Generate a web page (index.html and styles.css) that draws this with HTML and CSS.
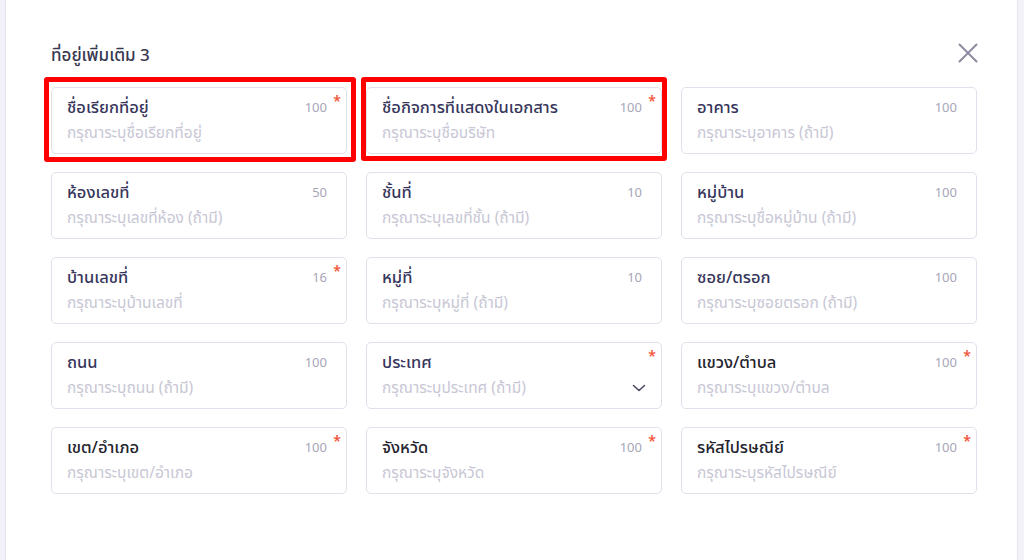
FILE: index.html
```html
<!DOCTYPE html>
<html lang="th">
<head>
<meta charset="utf-8">
<title>ที่อยู่เพิ่มเติม 3</title>
<link rel="stylesheet" href="styles.css">
</head>
<body>
<div class="modal">
  <div class="header">
    <h2 class="title">ที่อยู่เพิ่มเติม 3</h2>
    <button class="close" aria-label="close">
      <svg width="20" height="20" viewBox="0 0 20 20"><path d="M1.5 1.5 L18.5 18.5 M18.5 1.5 L1.5 18.5" stroke="#8d8ca2" stroke-width="2" stroke-linecap="round" fill="none"/></svg>
    </button>
  </div>
  <div class="grid">
    <div class="field mark mark-a"><div class="row"><span class="label">ชื่อเรียกที่อยู่</span><span class="count">100</span></div><div class="ph">กรุณาระบุชื่อเรียกที่อยู่</div><span class="req">*</span></div>
    <div class="field mark mark-b"><div class="row"><span class="label">ชื่อกิจการที่แสดงในเอกสาร</span><span class="count">100</span></div><div class="ph">กรุณาระบุชื่อบริษัท</div><span class="req">*</span></div>
    <div class="field"><div class="row"><span class="label">อาคาร</span><span class="count">100</span></div><div class="ph">กรุณาระบุอาคาร (ถ้ามี)</div></div>

    <div class="field"><div class="row"><span class="label">ห้องเลขที่</span><span class="count">50</span></div><div class="ph">กรุณาระบุเลขที่ห้อง (ถ้ามี)</div></div>
    <div class="field"><div class="row"><span class="label">ชั้นที่</span><span class="count">10</span></div><div class="ph">กรุณาระบุเลขที่ชั้น (ถ้ามี)</div></div>
    <div class="field"><div class="row"><span class="label">หมู่บ้าน</span><span class="count">100</span></div><div class="ph">กรุณาระบุชื่อหมู่บ้าน (ถ้ามี)</div></div>

    <div class="field"><div class="row"><span class="label">บ้านเลขที่</span><span class="count">16</span></div><div class="ph">กรุณาระบุบ้านเลขที่</div><span class="req">*</span></div>
    <div class="field"><div class="row"><span class="label">หมู่ที่</span><span class="count">10</span></div><div class="ph">กรุณาระบุหมู่ที่ (ถ้ามี)</div></div>
    <div class="field"><div class="row"><span class="label">ซอย/ตรอก</span><span class="count">100</span></div><div class="ph">กรุณาระบุซอยตรอก (ถ้ามี)</div></div>

    <div class="field"><div class="row"><span class="label">ถนน</span><span class="count">100</span></div><div class="ph">กรุณาระบุถนน (ถ้ามี)</div></div>
    <div class="field select"><div class="row"><span class="label">ประเทศ</span></div><div class="ph-row"><span class="ph">กรุณาระบุประเทศ (ถ้ามี)</span><svg class="chev" width="14" height="8" viewBox="0 0 14 8"><path d="M1.5 1.5 L7 6.5 L12.5 1.5" stroke="#4a4a62" stroke-width="1.6" stroke-linecap="round" stroke-linejoin="round" fill="none"/></svg></div><span class="req">*</span></div>
    <div class="field"><div class="row"><span class="label dark">แขวง/ตำบล</span><span class="count">100</span></div><div class="ph">กรุณาระบุแขวง/ตำบล</div><span class="req">*</span></div>

    <div class="field"><div class="row"><span class="label dark">เขต/อำเภอ</span><span class="count">100</span></div><div class="ph">กรุณาระบุเขต/อำเภอ</div><span class="req">*</span></div>
    <div class="field"><div class="row"><span class="label dark">จังหวัด</span><span class="count">100</span></div><div class="ph">กรุณาระบุจังหวัด</div><span class="req">*</span></div>
    <div class="field"><div class="row"><span class="label dark">รหัสไปรษณีย์</span><span class="count">100</span></div><div class="ph">กรุณาระบุรหัสไปรษณีย์</div><span class="req">*</span></div>
  </div>
</div>
</body>
</html>
```

FILE: styles.css
```css
* { box-sizing: border-box; }
html, body { margin: 0; padding: 0; }
body {
  background: #f3f2f9;
  font-family: "Noto Sans Thai", "Noto Sans", "Liberation Sans", sans-serif;
  width: 1024px;
  height: 560px;
  overflow: hidden;
}
.modal {
  margin-left: 5px;
  width: 1013px;
  height: 560px;
  background: #ffffff;
  border-left: 1px solid #e6e5ef;
  border-right: 1px solid #e6e5ef;
  padding: 43px 40px 0 45px;
}
.header {
  display: flex;
  justify-content: space-between;
  align-items: flex-start;
  height: 24px;
  margin-bottom: 20px;
}
.title {
  margin: 0;
  padding-top: 1px;
  font-size: 17px;
  font-weight: 500;
  color: #383850;
  line-height: 24px;
}
.close {
  border: 0;
  background: none;
  padding: 0;
  width: 20px;
  height: 20px;
  margin-right: -1px;
  display: flex;
}
.grid {
  display: grid;
  grid-template-columns: repeat(3, 296px);
  grid-auto-rows: 67px;
  column-gap: 19px;
  row-gap: 18px;
}
.field {
  position: relative;
  border: 1px solid #e2e1eb;
  border-radius: 5px;
  padding: 10px 19px 0 15px;
  background: #fff;
}
.mark::after {
  content: "";
  position: absolute;
  border: 5px solid #ff0000;
  border-radius: 3px;
  pointer-events: none;
}
.mark-a::after { left: -8px; right: -10px; top: -11px; bottom: -9px; }
.mark-b::after { left: -6px; right: -6px; top: -11px; bottom: -8px; }
.row {
  display: flex;
  justify-content: space-between;
  align-items: center;
  height: 20px;
}
.label {
  font-size: 16.5px;
  font-weight: 500;
  color: #37365c;
  line-height: 20px;
  white-space: nowrap;
}
.label.dark { color: #24242e; }
.count {
  font-size: 13px;
  color: #a7a6b8;
  line-height: 20px;
}
.ph {
  margin-top: 6px;
  font-size: 15.5px;
  color: #c8c7d5;
  line-height: 20px;
  white-space: nowrap;
}
.ph-row {
  display: flex;
  justify-content: space-between;
  align-items: center;
  margin-top: 6px;
  margin-right: -4px;
}
.ph-row .ph { margin-top: 0; }
.chev { display: block; margin-top: -2px; }
.req {
  position: absolute;
  top: 7px;
  right: 5px;
  font-size: 14px;
  line-height: 14px;
  color: #f2553a;
  font-weight: 600;
}
```
